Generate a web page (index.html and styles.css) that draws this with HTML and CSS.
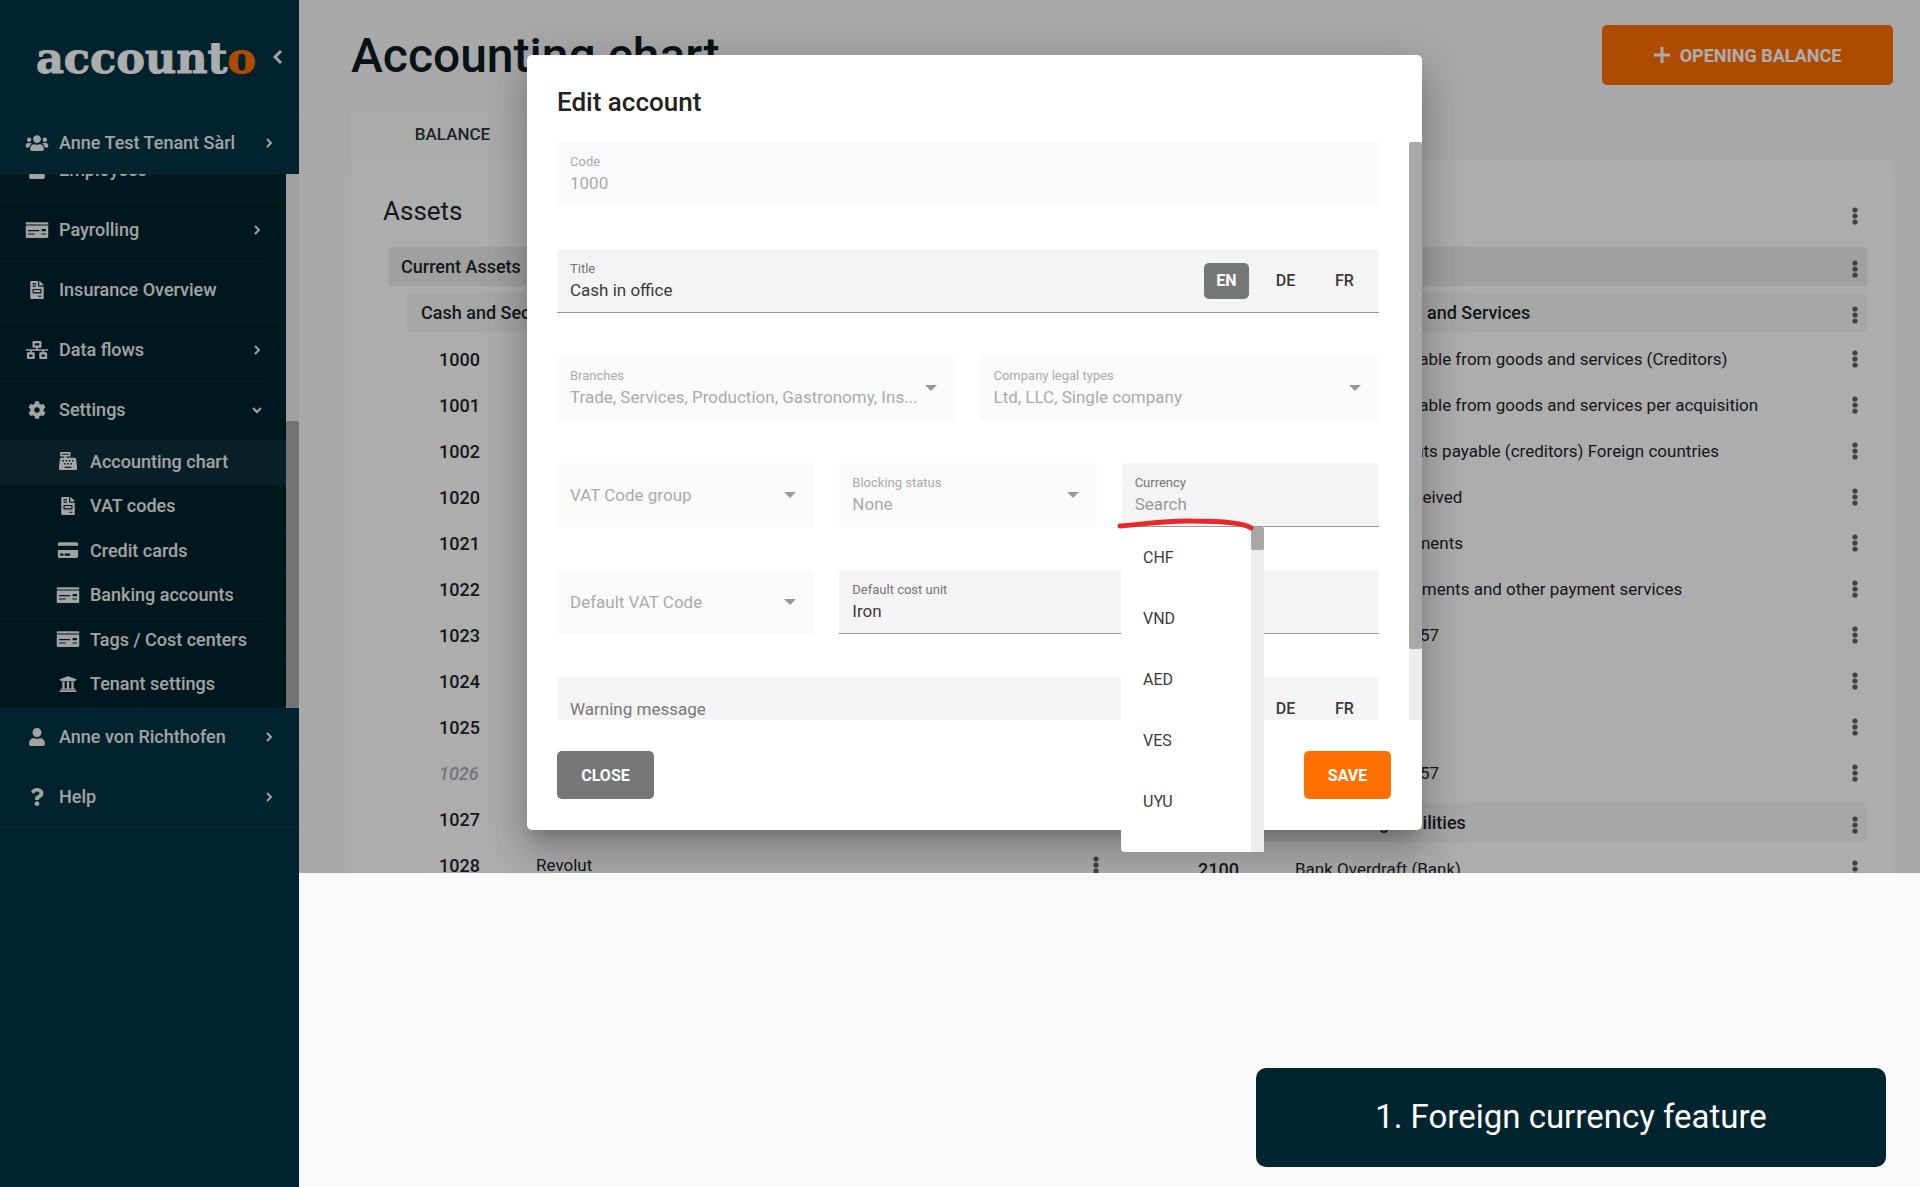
FILE: index.html
```html
<!DOCTYPE html>
<html lang="en">
  <head>
    <meta charset="UTF-8" />
    <title>Accounto - Accounting chart</title>
    <link rel="stylesheet" href="styles.css">
  </head>
  <body>
    <!-- Icon definitions -->
    <svg class="icon-defs" aria-hidden="true">
      <symbol id="i-users" viewBox="0 0 640 512"><path d="M96 224c35.300 0 64-28.700 64-64s-28.700-64-64-64-64 28.700-64 64 28.700 64 64 64zm448 0c35.300 0 64-28.700 64-64s-28.700-64-64-64-64 28.700-64 64 28.700 64 64 64zm32 32h-64c-17.600 0-33.500 7.100-45.100 18.600 40.300 22.100 68.900 62 75.100 109.400h66c17.700 0 32-14.300 32-32v-32c0-35.300-28.700-64-64-64zm-256 0c61.900 0 112-50.100 112-112S381.900 32 320 32 208 82.100 208 144s50.100 112 112 112zm76.800 32h-8.300c-20.800 10-43.900 16-68.500 16s-47.600-6-68.500-16h-8.300C179.600 288 128 339.600 128 403.200V432c0 26.500 21.500 48 48 48h288c26.500 0 48-21.500 48-48v-28.800c0-63.600-51.600-115.200-115.200-115.200zm-223.700-13.400C161.500 263.100 145.600 256 128 256H64c-35.300 0-64 28.700-64 64v32c0 17.700 14.300 32 32 32h65.900c6.300-47.400 34.900-87.300 75.200-109.400z"/></symbol>
      <symbol id="i-user" viewBox="0 0 448 512"><path d="M224 256c70.700 0 128-57.300 128-128S294.700 0 224 0 96 57.300 96 128s57.300 128 128 128zm89.600 32h-16.700c-22.200 10.200-46.900 16-72.900 16s-50.600-5.800-72.900-16h-16.700C60.200 288 0 348.200 0 422.400V464c0 26.500 21.500 48 48 48h352c26.500 0 48-21.500 48-48v-41.600c0-74.200-60.200-134.400-134.400-134.400z"/></symbol>
      <symbol id="i-money" viewBox="0 0 640 512"><path fill-rule="evenodd" d="M0 448c0 18 14 32 32 32h576c18 0 32-14 32-32V128H0v320zm448-208c0-9 7-16 16-16h96c9 0 16 7 16 16v32c0 9-7 16-16 16h-96c-9 0-16-7-16-16v-32zm0 120c0-4 4-8 8-8h112c4 0 8 4 8 8v16c0 4-4 8-8 8H456c-4 0-8-4-8-8v-16zM64 264c0-4 4-8 8-8h304c4 0 8 4 8 8v16c0 4-4 8-8 8H72c-4 0-8-4-8-8v-16zm0 96c0-4 4-8 8-8h176c4 0 8 4 8 8v16c0 4-4 8-8 8H72c-4 0-8-4-8-8v-16zM624 32H16C7 32 0 39 0 48v48h640V48c0-9-7-16-16-16z"/></symbol>
      <symbol id="i-invoice" viewBox="0 0 384 512"><path fill-rule="evenodd" d="M288 256H96v64h192v-64zM384 121.900c0-6.300-2.500-12.400-7-16.900L279 7c-4.500-4.500-10.600-7-17-7h-6v128h128v-6.100zM224 136V0H24C10.700 0 0 10.700 0 24v464c0 13.300 10.700 24 24 24h336c13.300 0 24-10.700 24-24V160H248c-13.200 0-24-10.800-24-24zM64 72c0-4.400 3.600-8 8-8h80c4.400 0 8 3.600 8 8v16c0 4.400-3.600 8-8 8H72c-4.400 0-8-3.600-8-8V72zm0 64c0-4.400 3.600-8 8-8h80c4.400 0 8 3.600 8 8v16c0 4.400-3.600 8-8 8H72c-4.400 0-8-3.600-8-8v-16zm256 304c0 4.400-3.600 8-8 8h-80c-4.400 0-8-3.600-8-8v-16c0-4.400 3.600-8 8-8h80c4.400 0 8 3.600 8 8v16zm0-200v96c0 8.800-7.200 16-16 16H80c-8.800 0-16-7.200-16-16v-96c0-8.800 7.200-16 16-16h224c8.800 0 16 7.200 16 16z"/></symbol>
      <symbol id="i-network" viewBox="0 0 640 512"><path fill-rule="evenodd" d="M640 264v-16c0-9-7-16-16-16H344v-40h72c18 0 32-14 32-32V32c0-18-14-32-32-32H224c-18 0-32 14-32 32v128c0 18 14 32 32 32h72v40H16c-9 0-16 7-16 16v16c0 9 7 16 16 16h104v40H64c-18 0-32 14-32 32v128c0 18 14 32 32 32h160c18 0 32-14 32-32V352c0-18-14-32-32-32h-56v-40h304v40h-56c-18 0-32 14-32 32v128c0 18 14 32 32 32h160c18 0 32-14 32-32V352c0-18-14-32-32-32h-56v-40h104c9 0 16-7 16-16zM256 128V64h128v64H256zm-64 320H96v-64h96v64zm352 0h-96v-64h96v64z"/></symbol>
      <symbol id="i-cog" viewBox="0 0 512 512"><path d="M487.400 315.700l-42.600-24.600c4.300-23.200 4.300-47 0-70.200l42.600-24.600c4.900-2.800 7.100-8.600 5.500-14-11.100-35.600-30-67.800-54.700-94.600-3.800-4.100-10-5.100-14.800-2.300L380.800 110c-17.900-15.400-38.500-27.300-60.800-35.100V25.800c0-5.600-3.900-10.500-9.400-11.700-36.700-8.200-74.300-7.800-109.200 0-5.500 1.200-9.400 6.100-9.400 11.700V75c-22.200 7.900-42.800 19.800-60.800 35.100L88.700 85.500c-4.900-2.800-11-1.900-14.800 2.300-24.700 26.700-43.600 58.900-54.700 94.600-1.700 5.400.6 11.200 5.500 14L67.300 221c-4.300 23.200-4.300 47 0 70.200l-42.600 24.600c-4.900 2.800-7.100 8.600-5.500 14 11.100 35.600 30 67.800 54.700 94.600 3.800 4.100 10 5.100 14.800 2.300l42.600-24.600c17.900 15.400 38.500 27.300 60.800 35.100v49.200c0 5.600 3.900 10.500 9.400 11.700 36.700 8.200 74.300 7.800 109.200 0 5.500-1.200 9.400-6.100 9.400-11.700v-49.200c22.200-7.900 42.800-19.800 60.800-35.100l42.600 24.600c4.900 2.800 11 1.900 14.800-2.300 24.700-26.700 43.600-58.900 54.700-94.600 1.500-5.500-.7-11.300-5.600-14.100zM256 336c-44.100 0-80-35.900-80-80s35.900-80 80-80 80 35.900 80 80-35.900 80-80 80z"/></symbol>
      <symbol id="i-register" viewBox="0 0 512 512"><path fill-rule="evenodd" d="M511 379l-26-182c-4-23-24-37-47-37H208v-32h104c9 0 16-7 16-16V16c0-9-7-16-16-16H48c-9 0-16 7-16 16v96c0 9 7 16 16 16h96v32H74c-23 0-43 14-47 37L1 379c-1 3-1 6-1 9v92c0 18 14 32 32 32h448c18 0 32-14 32-32v-92c0-3 0-6-1-9zM80 80V48h200v32H80zM280 230h42v40h-42zM190 230h42v40h-42zM100 230h42v40h-42zM370 230h42v40h-42zM145 316h42v40h-42zM235 316h42v40h-42zM325 316h42v40h-42zM160 416h192v40H160z"/></symbol>
      <symbol id="i-card" viewBox="0 0 576 512"><path fill-rule="evenodd" d="M0 432c0 26.500 21.500 48 48 48h480c26.500 0 48-21.500 48-48V256H0v176zm192-68c0-6.600 5.400-12 12-12h136c6.600 0 12 5.400 12 12v40c0 6.600-5.400 12-12 12H204c-6.600 0-12-5.400-12-12v-40zm-128 0c0-6.600 5.400-12 12-12h72c6.600 0 12 5.400 12 12v40c0 6.600-5.400 12-12 12H76c-6.600 0-12-5.400-12-12v-40zM576 80v56H0V80c0-26.500 21.500-48 48-48h480c26.500 0 48 21.500 48 48z"/></symbol>
      <symbol id="i-bank" viewBox="0 0 512 512"><path d="M496 128v16c0 4-4 8-8 8h-24v12c0 7-5 12-12 12H60c-7 0-12-5-12-12v-12H24c-4 0-8-4-8-8v-16c0-3 2-6 5-7L253 33c2-1 4-1 6 0l232 88c3 1 5 4 5 7zM472 432H40c-13 0-24 11-24 24v16c0 4 4 8 8 8h464c4 0 8-4 8-8v-16c0-13-11-24-24-24zM96 192v192H60c-7 0-12 5-12 12v20h416v-20c0-7-5-12-12-12h-36V192h-64v192h-64V192h-64v192h-64V192H96z"/></symbol>
      <symbol id="i-question" viewBox="0 0 384 512"><path d="M202 0C122 0 70.500 32.700 30 91c-7.400 10.600-5.100 25 5.200 32.900l43 32.700c10.400 7.900 25.200 6 33.300-4.100 25-31.400 43.600-49.500 82.700-49.500 30.800 0 68.800 19.800 68.800 49.600 0 22.600-18.600 34.200-49 51.200-35.400 19.900-82.300 44.600-82.300 106.400V320c0 13.300 10.700 24 24 24h72.500c13.300 0 24-10.700 24-24v-5.800c0-42.900 125.300-44.600 125.300-160.600C377.500 66.300 286.900 0 202 0zM192 373.500c-38.200 0-69.300 31-69.300 69.200S153.800 512 192 512s69.300-31.100 69.300-69.300-31.100-69.200-69.300-69.200z"/></symbol>
      <symbol id="i-right" viewBox="0 0 10 10"><path d="M3 1l4 4-4 4" fill="none" stroke="currentColor" stroke-width="2"/></symbol>
      <symbol id="i-down" viewBox="0 0 10 10"><path d="M1 3l4 4 4-4" fill="none" stroke="currentColor" stroke-width="2"/></symbol>
      <symbol id="i-left" viewBox="0 0 10 14"><path d="M8 1L2 7l6 6" fill="none" stroke="currentColor" stroke-width="3"/></symbol>
      <symbol id="i-plus" viewBox="0 0 16 16"><path d="M8 0v16M0 8h16" fill="none" stroke="currentColor" stroke-width="3"/></symbol>
      <symbol id="i-dots" viewBox="0 0 6 20"><circle cx="3" cy="4" r="2.600"/><circle cx="3" cy="10" r="2.600"/><circle cx="3" cy="16" r="2.600"/></symbol>
      <symbol id="i-caret" viewBox="0 0 12 6"><path d="M0 0h12L6 6z"/></symbol>
    </svg>

    <div class="app">
      <aside class="sidebar">
        <div class="brand">
          <a href="#" class="logo">account<span>o</span></a>
          <button type="button" class="collapse" aria-label="Collapse menu"><svg><use href="#i-left"/></svg></button>
        </div>
        <a href="#" class="menu-item"><svg class="icon"><use href="#i-users"/></svg><span>Anne Test Tenant Sàrl</span><svg class="chevron"><use href="#i-right"/></svg></a>
        <div class="menu-scroll">
          <nav class="menu-list">
            <a href="#" class="menu-item"><svg class="icon"><use href="#i-user"/></svg><span>Employees</span></a>
            <a href="#" class="menu-item"><svg class="icon"><use href="#i-money"/></svg><span>Payrolling</span><svg class="chevron"><use href="#i-right"/></svg></a>
            <a href="#" class="menu-item"><svg class="icon"><use href="#i-invoice"/></svg><span>Insurance Overview</span></a>
            <a href="#" class="menu-item"><svg class="icon"><use href="#i-network"/></svg><span>Data flows</span><svg class="chevron"><use href="#i-right"/></svg></a>
            <a href="#" class="menu-item"><svg class="icon"><use href="#i-cog"/></svg><span>Settings</span><svg class="chevron"><use href="#i-down"/></svg></a>
            <div class="submenu">
              <a href="#" class="active"><svg class="icon"><use href="#i-register"/></svg><span>Accounting chart</span></a>
              <a href="#"><svg class="icon"><use href="#i-invoice"/></svg><span>VAT codes</span></a>
              <a href="#"><svg class="icon"><use href="#i-card"/></svg><span>Credit cards</span></a>
              <a href="#"><svg class="icon"><use href="#i-money"/></svg><span>Banking accounts</span></a>
              <a href="#"><svg class="icon"><use href="#i-money"/></svg><span>Tags / Cost centers</span></a>
              <a href="#"><svg class="icon"><use href="#i-bank"/></svg><span>Tenant settings</span></a>
            </div>
          </nav>
          <div class="scrollbar"><div class="thumb"></div></div>
        </div>
        <a href="#" class="menu-item"><svg class="icon"><use href="#i-user"/></svg><span>Anne von Richthofen</span><svg class="chevron"><use href="#i-right"/></svg></a>
        <a href="#" class="menu-item"><svg class="icon"><use href="#i-question"/></svg><span>Help</span><svg class="chevron"><use href="#i-right"/></svg></a>
      </aside>

      <main class="content">
        <header class="page-header">
          <h1>Accounting chart</h1>
          <button type="button" class="btn-opening"><svg><use href="#i-plus"/></svg>OPENING BALANCE</button>
        </header>
        <div class="tabs"><button type="button" class="tab">BALANCE</button></div>
        <div class="chart">
          <section class="chart-column">
            <div class="chart-title"><h2>Assets</h2><button type="button" class="dots" aria-label="Actions"><svg><use href="#i-dots"/></svg></button></div>
            <div class="group"><h3>Current Assets</h3><button type="button" class="dots" aria-label="Actions"><svg><use href="#i-dots"/></svg></button></div>
            <div class="subgroup"><h4>Cash and Securities</h4><button type="button" class="dots" aria-label="Actions"><svg><use href="#i-dots"/></svg></button></div>
            <table class="accounts">
              <tr><th>1000</th><td>Cash in office</td><td class="actions"><button type="button" class="dots" aria-label="Actions"><svg><use href="#i-dots"/></svg></button></td></tr>
              <tr><th>1001</th><td>Cash EUR</td><td class="actions"><button type="button" class="dots" aria-label="Actions"><svg><use href="#i-dots"/></svg></button></td></tr>
              <tr><th>1002</th><td>Cash USD</td><td class="actions"><button type="button" class="dots" aria-label="Actions"><svg><use href="#i-dots"/></svg></button></td></tr>
              <tr><th>1020</th><td>Bank account</td><td class="actions"><button type="button" class="dots" aria-label="Actions"><svg><use href="#i-dots"/></svg></button></td></tr>
              <tr><th>1021</th><td>Bank account 2</td><td class="actions"><button type="button" class="dots" aria-label="Actions"><svg><use href="#i-dots"/></svg></button></td></tr>
              <tr><th>1022</th><td>Bank account 3</td><td class="actions"><button type="button" class="dots" aria-label="Actions"><svg><use href="#i-dots"/></svg></button></td></tr>
              <tr><th>1023</th><td>Bank account 4</td><td class="actions"><button type="button" class="dots" aria-label="Actions"><svg><use href="#i-dots"/></svg></button></td></tr>
              <tr><th>1024</th><td>Bank account 5</td><td class="actions"><button type="button" class="dots" aria-label="Actions"><svg><use href="#i-dots"/></svg></button></td></tr>
              <tr><th>1025</th><td>Bank account 6</td><td class="actions"><button type="button" class="dots" aria-label="Actions"><svg><use href="#i-dots"/></svg></button></td></tr>
              <tr class="inactive"><th>1026</th><td>Bank account 7</td><td class="actions"><button type="button" class="dots" aria-label="Actions"><svg><use href="#i-dots"/></svg></button></td></tr>
              <tr><th>1027</th><td>Paypal</td><td class="actions"><button type="button" class="dots" aria-label="Actions"><svg><use href="#i-dots"/></svg></button></td></tr>
              <tr><th>1028</th><td>Revolut</td><td class="actions"><button type="button" class="dots" aria-label="Actions"><svg><use href="#i-dots"/></svg></button></td></tr>
            </table>
          </section>
          <section class="chart-column">
            <div class="chart-title"><h2>Liabilities</h2><button type="button" class="dots" aria-label="Actions"><svg><use href="#i-dots"/></svg></button></div>
            <div class="group"><h3>Current Liabilities</h3><button type="button" class="dots" aria-label="Actions"><svg><use href="#i-dots"/></svg></button></div>
            <div class="subgroup"><h4>Accounts payable from Goods and Services</h4><button type="button" class="dots" aria-label="Actions"><svg><use href="#i-dots"/></svg></button></div>
            <table class="accounts">
              <tr><th>2000</th><td>All accounts payable from goods and services (Creditors)</td><td class="actions"><button type="button" class="dots" aria-label="Actions"><svg><use href="#i-dots"/></svg></button></td></tr>
              <tr><th>2001</th><td>All accounts payable from goods and services per acquisition</td><td class="actions"><button type="button" class="dots" aria-label="Actions"><svg><use href="#i-dots"/></svg></button></td></tr>
              <tr><th>2002</th><td>Business accounts payable (creditors) Foreign countries</td><td class="actions"><button type="button" class="dots" aria-label="Actions"><svg><use href="#i-dots"/></svg></button></td></tr>
              <tr><th>2030</th><td>Prepayments received</td><td class="actions"><button type="button" class="dots" aria-label="Actions"><svg><use href="#i-dots"/></svg></button></td></tr>
              <tr><th>2031</th><td>Advance prepayments</td><td class="actions"><button type="button" class="dots" aria-label="Actions"><svg><use href="#i-dots"/></svg></button></td></tr>
              <tr><th>2032</th><td>Internet card payments and other payment services</td><td class="actions"><button type="button" class="dots" aria-label="Actions"><svg><use href="#i-dots"/></svg></button></td></tr>
              <tr><th>2040</th><td>Credit card 421257</td><td class="actions"><button type="button" class="dots" aria-label="Actions"><svg><use href="#i-dots"/></svg></button></td></tr>
              <tr><th>2041</th><td>Credit card</td><td class="actions"><button type="button" class="dots" aria-label="Actions"><svg><use href="#i-dots"/></svg></button></td></tr>
              <tr><th>2042</th><td>Credit card</td><td class="actions"><button type="button" class="dots" aria-label="Actions"><svg><use href="#i-dots"/></svg></button></td></tr>
              <tr><th>2043</th><td>Credit card 421257</td><td class="actions"><button type="button" class="dots" aria-label="Actions"><svg><use href="#i-dots"/></svg></button></td></tr>
            </table>
            <div class="subgroup"><h4>Domestic interest-bearing liabilities</h4><button type="button" class="dots" aria-label="Actions"><svg><use href="#i-dots"/></svg></button></div>
            <table class="accounts">
              <tr><th>2100</th><td>Bank Overdraft (Bank)</td><td class="actions"><button type="button" class="dots" aria-label="Actions"><svg><use href="#i-dots"/></svg></button></td></tr>
            </table>
          </section>
        </div>
      </main>

      <div class="backdrop">
        <div class="modal" role="dialog" aria-labelledby="modal-title">
          <h2 id="modal-title">Edit account</h2>
          <div class="modal-scroll">
            <form class="modal-form">
              <div class="field disabled span-6">
                <div class="field-text">
                  <label for="code">Code</label>
                  <input type="text" id="code" value="1000" disabled />
                </div>
              </div>
              <div class="field span-6">
                <div class="field-text">
                  <label for="title">Title</label>
                  <input type="text" id="title" value="Cash in office" />
                </div>
                <div class="langs">
                  <button type="button" class="selected">EN</button>
                  <button type="button">DE</button>
                  <button type="button">FR</button>
                </div>
              </div>
              <div class="field disabled span-3">
                <div class="field-text">
                  <label for="branches">Branches</label>
                  <select id="branches" disabled><option>Trade, Services, Production, Gastronomy, Ins...</option></select>
                </div>
                <svg class="caret"><use href="#i-caret"/></svg>
              </div>
              <div class="field disabled span-3">
                <div class="field-text">
                  <label for="legal">Company legal types</label>
                  <select id="legal" disabled><option>Ltd, LLC, Single company</option></select>
                </div>
                <svg class="caret"><use href="#i-caret"/></svg>
              </div>
              <div class="field disabled span-2">
                <div class="field-text">
                  <select aria-label="VAT Code group" disabled><option>VAT Code group</option></select>
                </div>
                <svg class="caret"><use href="#i-caret"/></svg>
              </div>
              <div class="field disabled span-2">
                <div class="field-text">
                  <label for="blocking">Blocking status</label>
                  <select id="blocking" disabled><option>None</option></select>
                </div>
                <svg class="caret"><use href="#i-caret"/></svg>
              </div>
              <div class="field span-2">
                <div class="field-text">
                  <label for="currency">Currency</label>
                  <input type="text" id="currency" placeholder="Search" />
                </div>
              </div>
              <div class="field disabled span-2">
                <div class="field-text">
                  <select aria-label="Default VAT Code" disabled><option>Default VAT Code</option></select>
                </div>
                <svg class="caret"><use href="#i-caret"/></svg>
              </div>
              <div class="field span-4">
                <div class="field-text">
                  <label for="unit">Default cost unit</label>
                  <input type="text" id="unit" value="Iron" />
                </div>
              </div>
              <div class="field span-6">
                <div class="field-text">
                  <input type="text" aria-label="Warning message" class="warning" placeholder="Warning message" />
                </div>
                <div class="langs">
                  <button type="button" class="selected">EN</button>
                  <button type="button">DE</button>
                  <button type="button">FR</button>
                </div>
              </div>
            </form>
            <div class="scrollbar"><div class="thumb"></div></div>
          </div>
          <div class="modal-actions">
            <button type="button" class="btn-close">CLOSE</button>
            <button type="button" class="btn-save">SAVE</button>
          </div>

          <div class="dropdown">
            <ul role="listbox" aria-label="Currency">
              <li role="option">CHF</li>
              <li role="option">VND</li>
              <li role="option">AED</li>
              <li role="option">VES</li>
              <li role="option">UYU</li>
            </ul>
            <div class="scrollbar"><div class="thumb"></div></div>
            <svg class="marker" viewBox="0 0 140 16"><path d="M3 9C30 7 50 3 76 4c26 0 50 1 58 7" /></svg>
          </div>
        </div>
      </div>
    </div>

    <footer class="stage">
      <div class="stage-side"></div>
      <p class="callout">1. Foreign currency feature</p>
    </footer>
  </body>
</html>
```
FILE: styles.css
```css
* {
  box-sizing: border-box;
}
body {
  margin: 0;
  height: 100vh;
  display: flex;
  flex-direction: column;
  font-family: Roboto, "Liberation Sans", sans-serif;
  font-size: 17px;
  color: #1c2529;
  background: #f9f9f9;
}
h1, h2, h3, h4, p, ul {
  margin: 0;
  padding: 0;
  font-weight: 500;
}
a {
  color: inherit;
  text-decoration: none;
}
button {
  font: inherit;
  color: inherit;
  border: none;
  background: none;
  padding: 0;
  cursor: pointer;
}
svg {
  fill: currentColor;
}
.icon-defs {
  display: none;
}
.app {
  position: relative;
  display: flex;
  flex: 1;
  min-height: 0;
  overflow: hidden;
}

/* Sidebar */
.sidebar {
  width: 299px;
  flex-shrink: 0;
  background: #003443;
  color: #f0f0f0;
  font-size: 18px;
  font-weight: 500;
}
.brand {
  display: flex;
  align-items: center;
  justify-content: space-between;
  height: 114px;
  padding: 0 16px 0 36px;
  border-bottom: 1px solid #0b4050;
}
.logo {
  padding-top: 3px;
  font-family: "DejaVu Serif", serif;
  font-weight: bold;
  font-size: 43px;
  color: #fff;
  -webkit-text-stroke: 1px;
}
.logo span {
  color: #ff7000;
}
.collapse svg {
  display: block;
  width: 10px;
  height: 14px;
}
.menu-item {
  display: flex;
  align-items: center;
  height: 60px;
  padding: 0 25px 2px;
  border-bottom: 1px solid #083d4c;
}
.icon {
  width: 24px;
  height: 18px;
  margin-right: 10px;
}
.chevron {
  width: 10px;
  height: 10px;
  margin-left: auto;
}
.menu-scroll {
  display: flex;
  height: 534px;
  overflow: hidden;
}
.menu-list {
  flex: 1;
  display: flex;
  flex-direction: column;
  justify-content: flex-end;
  background: #00232e;
}
.menu-list .menu-item {
  flex-shrink: 0;
  padding-right: 24px;
  border-bottom-color: #05303c;
}
.submenu {
  display: grid;
  flex-shrink: 0;
  height: 267px;
  grid-template-rows: repeat(6, 1fr);
}
.submenu a {
  display: flex;
  align-items: center;
  padding: 0 0 3px 56px;
  border-bottom: 1px solid #052d38;
}
.submenu .active {
  background: #0e2f3b;
}
.scrollbar {
  width: 13px;
  flex-shrink: 0;
  background: #ededed;
}
.thumb {
  background: #a8a8a8;
  border-radius: 2px;
}
.menu-scroll .scrollbar {
  display: flex;
  flex-direction: column;
  justify-content: flex-end;
}
.menu-scroll .thumb {
  height: 287px;
}

/* Page */
.content {
  flex: 1;
  padding: 25px 27px 0 52px;
  background: #f9f9f9;
}
.page-header {
  display: flex;
  align-items: center;
  justify-content: space-between;
  height: 60px;
  margin-bottom: 26px;
}
h1 {
  font-size: 48px;
  color: #0c1c22;
}
.btn-opening {
  display: flex;
  align-items: center;
  justify-content: center;
  gap: 10px;
  width: 291px;
  height: 60px;
  border-radius: 5px;
  background: #ff7000;
  color: #fff;
  font-size: 18px;
  font-weight: bold;
}
.btn-opening svg {
  width: 16px;
  height: 16px;
}
.tabs {
  display: flex;
}
.tab {
  width: 203px;
  height: 49px;
  padding-bottom: 3px;
  background: #fcfcfc;
  color: #26363d;
  font-weight: 500;
}
.chart {
  display: grid;
  grid-template-columns: 1fr 1fr;
  gap: 34px;
  padding: 20px 26px 0 32px;
  border-radius: 10px;
  background: #fff;
}
.chart-title,
.group,
.subgroup {
  display: flex;
  align-items: center;
  justify-content: space-between;
}
.chart-title {
  height: 67px;
}
.chart-title h2 {
  font-size: 26px;
  font-weight: normal;
  padding-bottom: 5px;
}
.group,
.subgroup {
  height: 39px;
  margin-left: 6px;
  padding-left: 12px;
  background: #ececec;
}
.subgroup {
  margin: 7px 0 4px 24px;
  padding-left: 14px;
  background: #f7f7f7;
}
h3,
h4 {
  font-size: 18px;
}
.dots {
  width: 25px;
  padding-top: 4px;
  color: #606060;
}
.dots svg {
  display: block;
  width: 6px;
  height: 20px;
  margin: 0 auto;
}
.accounts {
  width: calc(100% - 56px);
  margin-left: 56px;
  border-collapse: collapse;
}
.accounts th,
.accounts td {
  height: 46px;
  padding: 0;
  text-align: left;
}
.accounts th {
  width: 97px;
  font-weight: 500;
  font-size: 18px;
}
.accounts .actions {
  width: 25px;
}
.inactive th {
  color: #a3b0b7;
  font-style: italic;
}

/* Edit dialog */
.backdrop {
  position: absolute;
  inset: 0;
  display: flex;
  justify-content: center;
  padding: 55px 0 43px 29px;
  background: rgba(0, 0, 0, 0.32);
}
.modal {
  position: relative;
  display: flex;
  flex-direction: column;
  width: 895px;
  border-radius: 5px;
  background: #fff;
  box-shadow: 0 11px 15px -7px rgba(0, 0, 0, 0.2),
    0 24px 38px 3px rgba(0, 0, 0, 0.14), 0 9px 46px 8px rgba(0, 0, 0, 0.12);
}
.modal h2 {
  height: 87px;
  padding: 32px 30px 0;
  font-size: 26px;
  color: #222;
}
.modal-scroll {
  display: flex;
  flex: 1;
  min-height: 0;
  overflow: hidden;
}
.modal-form {
  display: grid;
  flex: 1;
  grid-template-columns: repeat(6, 1fr);
  grid-auto-rows: 64px;
  gap: 43px 25px;
  padding: 0 30px;
}
.field {
  display: flex;
  align-items: center;
  gap: 8px;
  padding: 0 12px 0 13px;
  border-bottom: 1px solid #999;
  border-radius: 4px 4px 0 0;
  background: #f4f4f4;
  color: #3a3a3a;
}
.span-2 { grid-column: span 2; }
.span-3 { grid-column: span 3; }
.span-4 { grid-column: span 4; }
.span-6 { grid-column: span 6; }
.field-text {
  flex: 1;
  min-width: 0;
}
.field label {
  display: block;
  font-size: 13px;
  line-height: 16px;
  margin-bottom: 3px;
  color: #757575;
}
.field input,
.field select {
  display: block;
  width: 100%;
  height: 20px;
  padding: 0;
  border: none;
  outline: none;
  appearance: none;
  background: none;
  font-family: inherit;
  font-size: 17px;
  color: inherit;
  opacity: 1;
}
.field input::placeholder {
  color: #999;
}
.field .warning::placeholder {
  color: #777;
}
.field.disabled {
  border-bottom-color: #fafafa;
  background: #fafafa;
  color: #aaa;
}
.field.disabled label {
  color: #aaa;
}
.caret {
  width: 12px;
  height: 6px;
  margin-right: 6px;
  color: #999;
}
.langs {
  display: flex;
  gap: 14px;
}
.langs button {
  width: 45px;
  height: 36px;
  border-radius: 5px;
  font-size: 16px;
  font-weight: 500;
}
.langs .selected {
  background: #757776;
  color: #fff;
  font-weight: bold;
}
.modal-scroll .thumb {
  height: 507px;
}
.modal-actions {
  display: flex;
  justify-content: space-between;
  padding: 31px 31px 31px 30px;
}
.modal-actions button {
  height: 48px;
  border-radius: 5px;
  color: #fff;
  font-size: 16px;
  font-weight: bold;
}
.btn-close {
  width: 97px;
  background: #757776;
}
.btn-save {
  width: 87px;
  background: #ff7000;
}

/* Currency list opened over the dialog */
.dropdown {
  position: absolute;
  top: 472px;
  right: 158px;
  display: flex;
  width: 143px;
  height: 325px;
  border-radius: 0 0 4px 4px;
  background: #fff;
}
.dropdown ul {
  flex: 1;
  list-style: none;
}
.dropdown li {
  height: 61px;
  line-height: 61px;
  padding-left: 22px;
  font-size: 16px;
  font-weight: normal;
  color: #3a3a3a;
}
.dropdown .thumb {
  height: 23px;
}
.marker {
  position: absolute;
  top: -10px;
  left: -4px;
  width: 140px;
  height: 16px;
}
.marker path {
  fill: none;
  stroke: #e8282b;
  stroke-width: 5;
  stroke-linecap: round;
}

/* Caption below the app */
.stage {
  display: flex;
  justify-content: space-between;
  align-items: flex-end;
  height: 314px;
  padding-right: 34px;
}
.stage-side {
  width: 299px;
  height: 100%;
  background: #00242f;
}
.callout {
  width: 630px;
  padding: 27px 20px 29px;
  margin-bottom: 20px;
  border-radius: 10px;
  background: #00252f;
  color: #fff;
  font-size: 33px;
  line-height: 43px;
  font-weight: normal;
  text-align: center;
}
```
